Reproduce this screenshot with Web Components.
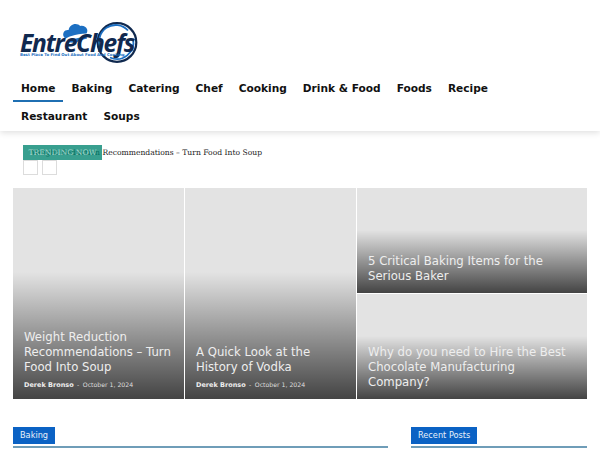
<!DOCTYPE html>
<html>
<head>
<meta charset="utf-8">
<title>EntreChefs</title>
<style>
  html, body { margin: 0; padding: 0; background: #fff; height: 450px; overflow: hidden; }
  body { font-family: "DejaVu Sans", sans-serif; color: #000; }
</style>
</head>
<body>
<site-header>
  <nav-item active>Home</nav-item>
  <nav-item>Baking</nav-item>
  <nav-item>Catering</nav-item>
  <nav-item>Chef</nav-item>
  <nav-item>Cooking</nav-item>
  <nav-item>Drink &amp; Food</nav-item>
  <nav-item>Foods</nav-item>
  <nav-item>Recipe</nav-item>
  <nav-item>Restaurant</nav-item>
  <nav-item>Soups</nav-item>
</site-header>
<trending-bar label="TRENDING NOW">Weight Reduction Recommendations – Turn Food Into Soup</trending-bar>
<hero-grid>
  <hero-card class="a" author="Derek Bronso" date="October 1, 2024">Weight Reduction Recommendations – Turn Food Into Soup</hero-card>
  <hero-card class="b" author="Derek Bronso" date="October 1, 2024">A Quick Look at the History of Vodka</hero-card>
  <hero-card class="c">5 Critical Baking Items for the Serious Baker</hero-card>
  <hero-card class="d">Why do you need to Hire the Best Chocolate Manufacturing Company?</hero-card>
</hero-grid>
<section-row>
  <section-title class="main">Baking</section-title>
  <section-title class="side">Recent Posts</section-title>
</section-row>

<script>
// Small helper so every element gets an open shadow root the same way
class Base extends HTMLElement {
    render(html) {
        this.attachShadow({ mode: 'open' });
        this.shadowRoot.innerHTML = html;
    }
}

class SiteLogo extends Base {
    connectedCallback() {
        this.render(`
            <style>
                :host { display: block; position: relative; width: 130px; height: 50px; }
                svg { position: absolute; left: 0; top: 0; display: block; }
                .words { position: relative; padding: 15px 0 0 7px; white-space: nowrap; }
                .name {
                    font: italic 700 24.500px/20px "Open Sans", sans-serif;
                    color: #10294f;
                    letter-spacing: -1.2px;
                }
                .tag {
                    font: 700 3.900px/4px "DejaVu Sans", sans-serif;
                    color: #1c6fc2;
                }
            </style>
            <svg width="130" height="50" viewBox="0 0 130 50">
                <!-- chef hat -->
                <path d="M52.500 20.500c-2.300-1.500-3-4-1.800-6.200 1-1.800 3-2.600 4.900-2.200 .6-3.500 3.500-6 7-6 1.800 0 3.400.7 4.500 1.800 3-.8 6 .7 7 3.300 .5 1.600 .2 3-.6 4.200-5.500.3-10.500 1.100-15 2.500-2.500.8-4.500 1.600-6 2.600z" fill="#1c6fc2"/>
                <path d="M54.500 24c4.800-2.900 11.500-4.700 19-5.200l.6 1.800c-4.200.9-8 2.300-11 4.100-2.800.1-6 .1-8.600-.7z" fill="#1c6fc2"/>
                <!-- ring -->
                <circle cx="104" cy="24.500" r="19.300" fill="none" stroke="#10294f" stroke-width="2.200"/>
                <path d="M88 31a16.500 16.500 0 0 1 27-18.500" fill="none" stroke="#1c6fc2" stroke-width="1.800"/>
                <path d="M120 21a16.500 16.500 0 0 1-23 18.500" fill="none" stroke="#1c6fc2" stroke-width="1.800"/>
            </svg>
            <div class="words">
                <div class="name">EntreChefs</div>
                <div class="tag">Best Place To Find Out About Food And Cooking</div>
            </div>
        `);
    }
}
customElements.define('site-logo', SiteLogo);

class SiteHeader extends Base {
    connectedCallback() {
        this.render(`
            <style>
                :host {
                    display: block;
                    height: 131px;
                    box-sizing: border-box;
                    padding: 18px 13px 0;
                    box-shadow: 0 2px 6px rgba(0, 0, 0, 0.12);
                }
                nav {
                    display: flex;
                    flex-wrap: wrap;
                    margin-top: 6px;
                    max-width: 520px;
                }
            </style>
            <site-logo></site-logo>
            <nav><slot></slot></nav>
        `);
    }
}
customElements.define('site-header', SiteHeader);

class NavItem extends Base {
    connectedCallback() {
        this.render(`
            <style>
                :host {
                    display: block;
                    height: 28px;
                    box-sizing: border-box;
                    padding: 0 8px;
                    font: 700 10.600px/28px "DejaVu Sans", sans-serif;
                    color: #111;
                    white-space: nowrap;
                }
                :host([active]) { border-bottom: 2px solid #1f6fb2; }
            </style>
            <slot></slot>
        `);
    }
}
customElements.define('nav-item', NavItem);

class TrendingBar extends Base {
    connectedCallback() {
        const label = this.getAttribute('label') || '';
        this.render(`
            <style>
                :host {
                    display: block;
                    position: relative;
                    height: 57px;
                    box-sizing: border-box;
                    padding: 15px 0 0 23px;
                    font: 7.620px/13px "DejaVu Serif", serif;
                    color: #222;
                }
                .text { padding-left: 8.400px; }
                .label {
                    position: absolute;
                    left: 23px;
                    top: 13.500px;
                    width: 79px;
                    height: 15px;
                    background: rgba(0, 132, 112, 0.78);
                    color: rgba(215, 240, 232, 0.7);
                    font: 7.620px/15px "DejaVu Serif", serif;
                    text-align: center;
                }
                .btns { display: flex; gap: 4px; margin-top: 1px; }
                .btns span {
                    display: block;
                    width: 13px;
                    height: 13px;
                    border: 1px solid #dcdcdc;
                }
            </style>
            <div class="text"><slot></slot></div>
            <div class="btns"><span></span><span></span></div>
            <div class="label">${label}</div>
        `);
    }
}
customElements.define('trending-bar', TrendingBar);

class HeroGrid extends Base {
    connectedCallback() {
        this.render(`
            <style>
                :host {
                    display: grid;
                    grid-template-columns: 171px 171px 230px;
                    grid-template-rows: 105px 105px;
                    gap: 1px;
                    margin: 0 13px;
                    height: 211px;
                }
                ::slotted(.a) { grid-row: 1 / 3; }
                ::slotted(.b) { grid-row: 1 / 3; }
            </style>
            <slot></slot>
        `);
    }
}
customElements.define('hero-grid', HeroGrid);

class HeroCard extends Base {
    connectedCallback() {
        const author = this.getAttribute('author');
        const date = this.getAttribute('date');
        const meta = author ? `<div class="meta"><b>${author}</b><i>-</i><span>${date}</span></div>` : '';
        this.render(`
            <style>
                :host {
                    display: flex;
                    position: relative;
                    flex-direction: column;
                    justify-content: flex-end;
                    background: #e3e3e3;
                    overflow: hidden;
                }
                .shade {
                    position: absolute;
                    left: 0;
                    right: 0;
                    bottom: 0;
                    height: 60%;
                    background: linear-gradient(to bottom, rgba(0,0,0,0), rgba(0,0,0,0.7));
                }
                .info {
                    position: relative;
                    padding: 0 11px 9.500px;
                    color: #eee;
                }
                .title { font: 400 11.700px/15px "DejaVu Sans", sans-serif; }
                .meta {
                    display: flex;
                    gap: 3.500px;
                    margin-top: 5px;
                    font: 6.200px/10px "DejaVu Sans", sans-serif;
                    color: #ddd;
                }
                .meta b { color: #eee; font-size: 6.500px; }
                .meta i { font-style: normal; }
            </style>
            <div class="shade"></div>
            <div class="info">
                <div class="title"><slot></slot></div>
                ${meta}
            </div>
        `);
    }
}
customElements.define('hero-card', HeroCard);

class SectionRow extends Base {
    connectedCallback() {
        this.render(`
            <style>
                :host {
                    display: grid;
                    grid-template-columns: 375px 176px;
                    column-gap: 23px;
                    margin: 28px 13px 0;
                }
            </style>
            <slot></slot>
        `);
    }
}
customElements.define('section-row', SectionRow);

class SectionTitle extends Base {
    connectedCallback() {
        this.render(`
            <style>
                :host { display: block; border-bottom: 2px solid #6f9db8; }
                span {
                    display: inline-block;
                    vertical-align: top;
                    padding: 0 7px;
                    background: #0b62c4;
                    color: #e8f0fa;
                    font: 8.200px/17px "DejaVu Sans", sans-serif;
                }
            </style>
            <span><slot></slot></span>
        `);
    }
}
customElements.define('section-title', SectionTitle);
</script>
</body>
</html>
